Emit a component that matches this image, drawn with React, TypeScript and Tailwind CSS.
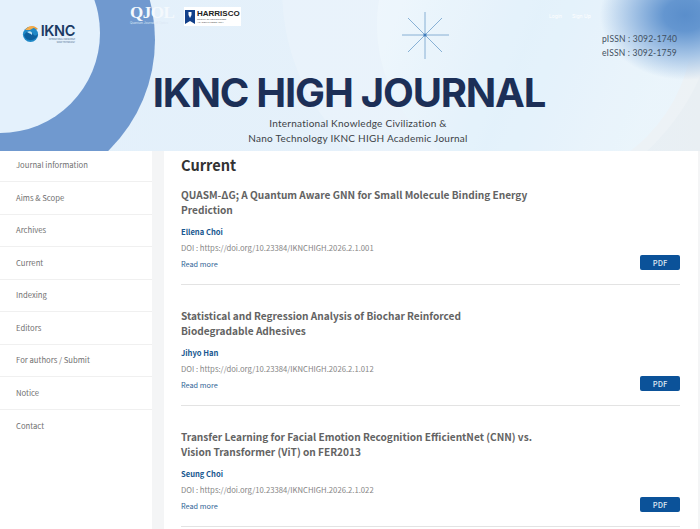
import React from 'react';

const menu = [
  'Journal information',
  'Aims & Scope',
  'Archives',
  'Current',
  'Indexing',
  'Editors',
  'For authors / Submit',
  'Notice',
  'Contact',
];

const articles = [
  {
    title: 'QUASM-ΔG; A Quantum Aware GNN for Small Molecule Binding Energy Prediction',
    author: 'Ellena Choi',
    doi: 'DOI : https://doi.org/10.23384/IKNCHIGH.2026.2.1.001',
  },
  {
    title: 'Statistical and Regression Analysis of Biochar Reinforced Biodegradable Adhesives',
    author: 'Jihyo Han',
    doi: 'DOI : https://doi.org/10.23384/IKNCHIGH.2026.2.1.012',
  },
  {
    title: 'Transfer Learning for Facial Emotion Recognition EfficientNet (CNN) vs. Vision Transformer (ViT) on FER2013',
    author: 'Seung Choi',
    doi: 'DOI : https://doi.org/10.23384/IKNCHIGH.2026.2.1.022',
  },
];

const HeaderArt = () => (
  <svg className="absolute inset-0" width="700" height="151" viewBox="0 0 700 151">
    <defs>
      <linearGradient id="bg" x1="0" y1="0" x2="1" y2="0">
        <stop offset="0" stopColor="#e3f0fb" />
        <stop offset="0.7" stopColor="#e6f1fa" />
        <stop offset="1" stopColor="#e9eff3" />
      </linearGradient>
      <linearGradient id="orb" x1="0" y1="0" x2="1" y2="0.4">
        <stop offset="0" stopColor="#f1f8fe" />
        <stop offset="0.6" stopColor="#dceefa" />
        <stop offset="1" stopColor="#e6f3fc" />
      </linearGradient>
    </defs>
    <rect width="700" height="151" fill="url(#bg)" />
    <circle cx="535" cy="25" r="158" fill="url(#orb)" opacity="0.9" />
    <circle cx="500" cy="-10" r="218" fill="#ffffff" opacity="0.18" />
    <circle cx="0" cy="40" r="155" fill="#7099cf" />
    <circle cx="0" cy="33" r="100" fill="#e4f1fc" />
    {/* star */}
    <g stroke="#6f9fca" strokeWidth="0.8">
      <line x1="425" y1="12" x2="425" y2="59" />
      <line x1="402" y1="35" x2="449" y2="35" />
      <line x1="408" y1="18" x2="442" y2="52" />
      <line x1="442" y1="18" x2="408" y2="52" />
    </g>
    <circle cx="425" cy="35" r="1.6" fill="#3f7cbc" />
  </svg>
);

const IkncLogo = () => (
  <div className="absolute left-[21px] top-[23px] flex items-center gap-[1px]">
    <svg width="19" height="19" viewBox="0 0 19 19">
      <path d="M4 6 A8 8 0 0 1 17 5 L12 7 Z" fill="#ef9f3c" />
      <circle cx="9.5" cy="10.5" r="7.6" fill="#1e88c7" />
      <path d="M3 11 C6 6 11 7 12 10 C14 13 16 11 17 10 C16 17 5 19 3 11 Z" fill="#0c5f9e" />
      <path d="M6 8 C9 6 12 8 11 11 C9 9 7 9 6 8 Z" fill="#bfe6f5" />
      <path d="M4 6 A8 8 0 0 1 14 3 L9 6 Z" fill="#f2ad4e" />
    </svg>
    <div className="flex w-[34px] flex-col items-end">
      <span className="font-['Inter',sans-serif] text-[14.5px] leading-[15px] font-semibold tracking-[-0.4px] text-[#1b3a63]">IKNC</span>
      <span className="font-['Inter',sans-serif] text-[1.8px] leading-[2.5px] text-[#4a6a8c] whitespace-nowrap">INTERNATIONAL KNOWLEDGE</span>
      <span className="font-['Inter',sans-serif] text-[1.8px] leading-[2.5px] text-[#4a6a8c] whitespace-nowrap">NANO TECHNOLOGY</span>
    </div>
  </div>
);

const PartnerLogos = () => (
  <>
    <div className="absolute left-[130px] top-[5px] flex flex-col items-start">
      <span className="font-['Liberation_Serif',serif] text-[17px] leading-[15px] font-bold tracking-[-0.5px] text-[#f4f9fd]">QJOL</span>
      <span className="font-['Inter',sans-serif] text-[3px] leading-[6px] text-[#dbe8f5] whitespace-nowrap">Quantum Journal of Optics</span>
    </div>
    <div className="absolute left-[184px] top-[7px] flex h-[19px] w-[57px] items-center gap-[2px] bg-white px-[1px]">
      <svg width="10" height="16" viewBox="0 0 10 16">
        <path d="M0 1 H10 V15 L5 12 L0 15 Z" fill="#12408a" />
        <path d="M3.5 3 H6.5 V6 L5 9 L3.5 6 Z" fill="#ffffff" />
      </svg>
      <div className="flex flex-col">
        <span className="font-['Liberation_Sans',sans-serif] text-[8px] leading-[8px] font-bold text-[#222222]">HARRISCO</span>
        <span className="font-['Liberation_Sans',sans-serif] text-[2.4px] leading-[3px] text-[#555555] whitespace-nowrap">GROUP OF RECOGNIZED</span>
        <span className="font-['Liberation_Sans',sans-serif] text-[2.4px] leading-[3px] text-[#555555] whitespace-nowrap">ACADEMIC RESEARCH</span>
      </div>
    </div>
  </>
);

const Header = () => (
  <header className="relative h-[151px] w-full shrink-0 overflow-hidden">
    <HeaderArt />
    {/* blue glow, top right */}
    <div className="absolute top-[-50px] right-[-70px] h-[130px] w-[170px] rounded-full bg-[radial-gradient(closest-side,#5a8ecb_0%,#6496d0_25%,#a5c4e6_62%,#dcebf800_100%)]" />
    <IkncLogo />
    <PartnerLogos />
    <div className="absolute left-[549px] top-[13px] flex gap-[10px] font-['Inter',sans-serif] text-[5px] leading-[6px] text-white">
      <span>Login</span>
      <span>Sign Up</span>
    </div>
    <div className="absolute left-[602px] top-[32px] font-['Lato',sans-serif] text-[8.5px] leading-[14px] text-[#3f4f60] tracking-[0.2px]">
      <p>pISSN : 3092-1740</p>
      <p>eISSN : 3092-1759</p>
    </div>
    <div className="absolute inset-x-0 top-[69px] flex flex-col items-center">
      <h1 className="pr-[2px] font-['Inter',sans-serif] text-[40px] leading-[48px] font-bold tracking-[-1.2px] text-[#1c2f57] whitespace-nowrap">
        IKNC HIGH JOURNAL
      </h1>
      <p className="mt-[-1px] pl-[16px] text-center font-['Lato',sans-serif] text-[10px] leading-[14.5px] tracking-[0.25px] text-[#3b3f46]">
        International Knowledge Civilization &amp;
        <br />
        Nano Technology IKNC HIGH Academic Journal
      </p>
    </div>
  </header>
);

const Sidebar = () => (
  <aside className="w-[152px] shrink-0 bg-white">
    <ul className="-mt-[1.5px]">
      {menu.map((item, i) => (
        <li
          key={item}
          className={`flex h-[32.5px] items-center pl-[16px] text-[7.7px] text-[#707070] ${i < menu.length - 1 ? 'border-b border-[#f0f0f0]' : ''}`}
        >
          {item}
        </li>
      ))}
    </ul>
  </aside>
);

const Article = ({ title, author, doi }: { title: string; author: string; doi: string }) => (
  <article className="relative h-[121px] shrink-0 border-b border-[#e3e3e3] pt-[23px]">
    <h3 className="w-[353px] text-[10.1px] leading-[15px] font-semibold text-[#636363]">{title}</h3>
    <p className="mt-[7px] text-[7.6px] leading-[16px] font-semibold text-[#17578f]">{author}</p>
    <p className="text-[7.7px] leading-[16px] text-[#858585]">{doi}</p>
    <p className="text-[7.3px] leading-[16px] text-[#2f6395]">Read more</p>
    <button className="absolute right-0 bottom-[14px] h-[15px] w-[40px] rounded-[2px] bg-[#0b5299] text-[7.5px] leading-[15px] font-medium text-[#dfe9f3]">
      PDF
    </button>
  </article>
);

const App: React.FC = () => {
  return (
    <div className="flex h-[529px] w-[700px] flex-col overflow-hidden bg-[#f4f5f6] font-['Noto_Sans_CJK_KR','Noto_Sans',sans-serif]">
      <Header />
      <div className="flex min-h-0 flex-1 gap-[12px] pr-[2px]">
        <Sidebar />
        <main className="min-h-0 flex-1 overflow-hidden bg-white pr-[18px] pl-[17px]">
          <h2 className="-mb-[12px] pt-[3px] text-[14.6px] leading-[22px] font-bold text-[#333333]">Current</h2>
          <div>
            {articles.map((a) => (
              <Article key={a.author} {...a} />
            ))}
          </div>
        </main>
      </div>
    </div>
  );
};

export default App;
